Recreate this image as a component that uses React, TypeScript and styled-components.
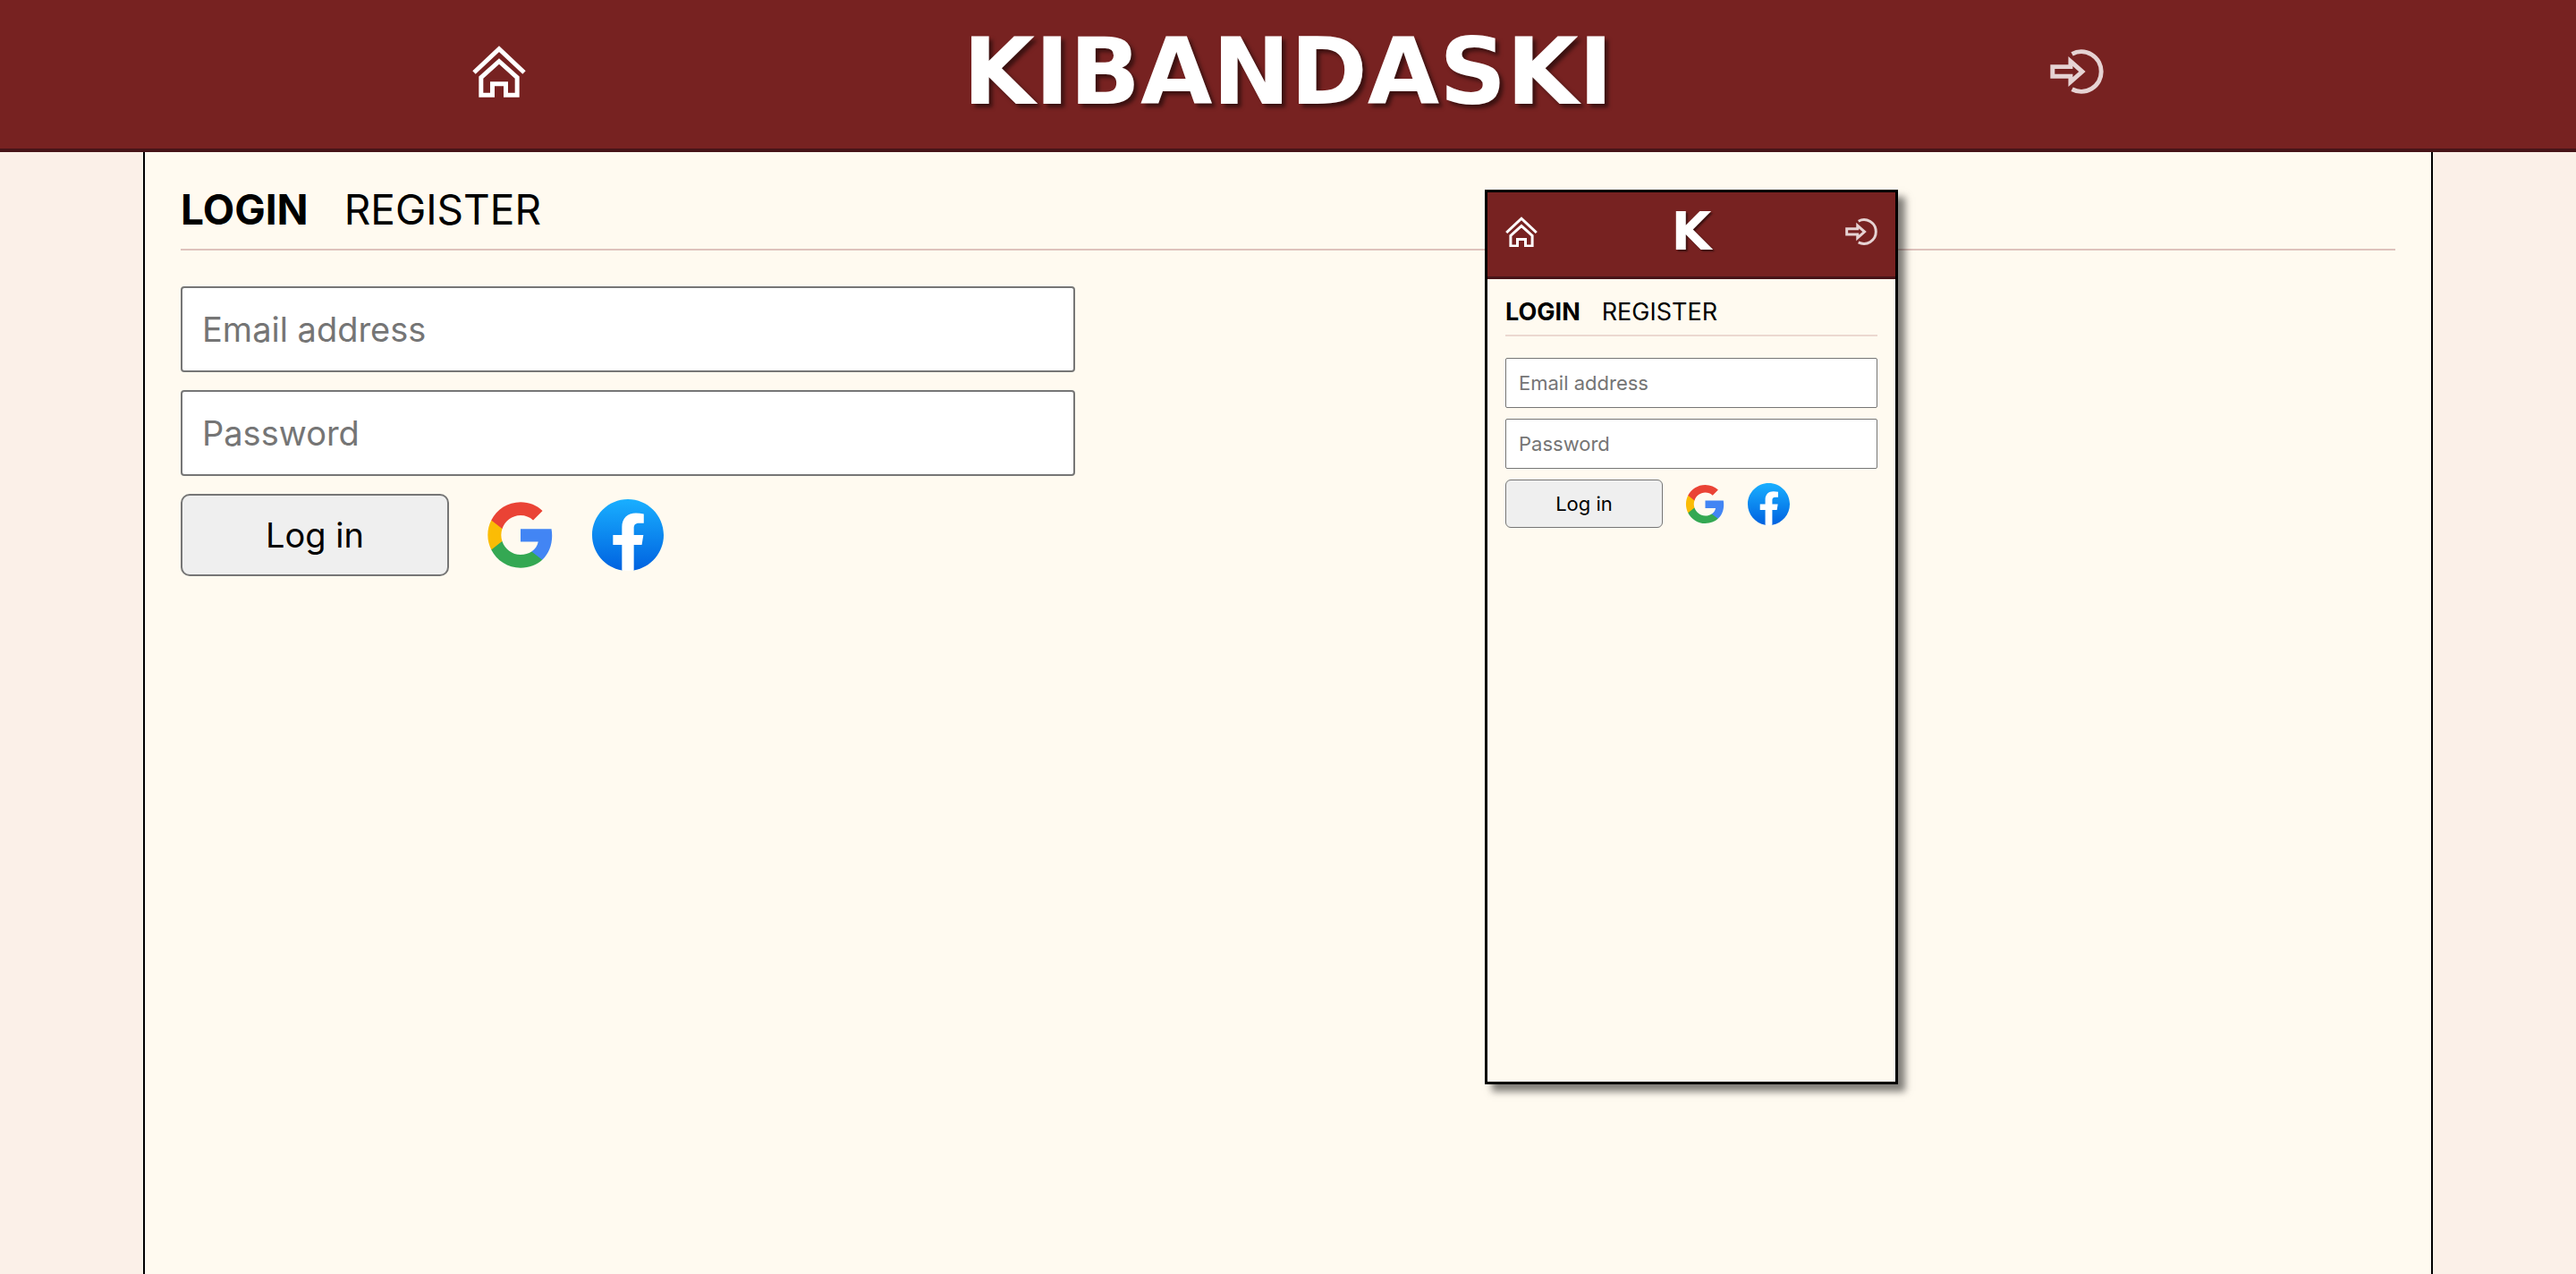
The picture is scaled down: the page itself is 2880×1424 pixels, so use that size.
import React, { useId } from "react";
import styled, { createGlobalStyle, css } from "styled-components";

const GlobalStyle = createGlobalStyle`
  *, *::before, *::after {
    box-sizing: border-box;
  }
  body {
    margin: 0;
    background: #fbf0e8;
    color: #000;
    font-family: Inter, "Noto Sans", sans-serif;
  }
`;

type Sized = { $compact?: boolean };

const Page = styled.div`
  display: flex;
  flex-direction: column;
  min-height: 100vh;
`;

const HeaderBar = styled.header<Sized>`
  background: #772221;
  border-bottom: ${(p) => (p.$compact ? "3px" : "4px")} solid #471418;
  padding: ${(p) => (p.$compact ? "0 20px 6px" : "0 40px 6px")};
`;

const HeaderRow = styled.div<Sized>`
  display: flex;
  align-items: center;
  justify-content: space-between;
  max-width: 1824px;
  height: ${(p) => (p.$compact ? "88px" : "160px")};
  margin: 0 auto;
`;

const Brand = styled.h1<Sized>`
  margin: 0;
  color: #fff;
  font-family: "DejaVu Sans", sans-serif;
  font-weight: 700;
  font-size: ${(p) => (p.$compact ? "58px" : "104px")};
  line-height: 1;
  text-shadow: ${(p) =>
    p.$compact
      ? "2px 2px 2px rgba(0, 0, 0, 0.5)"
      : "4px 4px 4px rgba(0, 0, 0, 0.5)"};
`;

const HeaderLink = styled.a<Sized & { $muted?: boolean }>`
  display: flex;
  color: ${(p) => (p.$muted ? "#e6d3d3" : "#fff")};

  svg {
    display: block;
    width: ${(p) => (p.$compact ? "36px" : "60px")};
    height: auto;
  }
`;

const Main = styled.main`
  position: relative;
  flex: 1;
  width: 100%;
  max-width: 2560px;
  margin: 0 auto;
  padding: 40px;
  background: #fffaf0;
  border: solid #000;
  border-width: 0 2px;
`;

const Tabs = styled.nav<Sized>`
  display: flex;
  gap: ${(p) => (p.$compact ? "24px" : "40px")};
  padding-bottom: ${(p) => (p.$compact ? "12px" : "20px")};
  margin-bottom: ${(p) => (p.$compact ? "24px" : "40px")};
  border-bottom: 2px solid ${(p) => (p.$compact ? "#ecd8d0" : "#dec2bc")};
  font-size: ${(p) => (p.$compact ? "27px" : "46px")};
  line-height: ${(p) => (p.$compact ? "26px" : "48px")};
`;

const Tab = styled.a<{ $active?: boolean }>`
  color: inherit;
  text-decoration: none;
  font-weight: ${(p) => (p.$active ? 700 : 400)};
`;

const Form = styled.form<Sized>`
  display: flex;
  flex-direction: column;
  gap: ${(p) => (p.$compact ? "12px" : "20px")};
  max-width: 1000px;
`;

const controlText = css<Sized>`
  font-family: inherit;
  font-weight: 400;
  font-size: ${(p) => (p.$compact ? "22px" : "38px")};
  border: ${(p) => (p.$compact ? "1px" : "2px")} solid #767676;
`;

const TextBox = styled.input<Sized>`
  ${controlText}
  width: 100%;
  height: ${(p) => (p.$compact ? "56px" : "96px")};
  padding: 0 ${(p) => (p.$compact ? "14px" : "22px")};
  background: #fff;
  border-radius: ${(p) => (p.$compact ? "2px" : "4px")};

  &::placeholder {
    color: #757575;
    opacity: 1;
  }
`;

const Actions = styled.div<Sized>`
  display: flex;
  align-items: center;
  gap: ${(p) => (p.$compact ? "24px" : "40px")};
`;

const SubmitButton = styled.button<Sized>`
  ${controlText}
  width: ${(p) => (p.$compact ? "176px" : "300px")};
  height: ${(p) => (p.$compact ? "54px" : "92px")};
  padding: 0;
  color: #000;
  background: #efefef;
  border-radius: ${(p) => (p.$compact ? "6px" : "10px")};
`;

const SocialButton = styled.button<Sized>`
  padding: 0;
  border: 0;
  background: none;

  svg {
    display: block;
    width: ${(p) => (p.$compact ? "47px" : "80px")};
    height: ${(p) => (p.$compact ? "47px" : "80px")};
  }
`;

const PhonePreview = styled.section`
  position: absolute;
  top: 42px;
  right: 596px;
  width: 462px;
  height: 1000px;
  background: #fffaf0;
  border: 3px solid #000;
  box-shadow: 8px 8px 8px rgba(0, 0, 0, 0.5);
`;

const PhoneBody = styled.div`
  padding: 24px 20px;
`;

const HomeIcon = () => (
  <svg viewBox="84 97 180 174" fill="none" stroke="currentColor" strokeWidth="15" aria-hidden="true">
    <path d="M90 187 L174 108 L258 187" />
    <path d="M113.5 262.5 V204 L174 149.5 L234.5 204 V262.5 H196.5 V225 H151.5 V262.5 Z" />
  </svg>
);

const EnterIcon = () => (
  <svg viewBox="95 104 182 152" fill="none" stroke="currentColor" strokeWidth="15" aria-hidden="true">
    <path d="M103.5 163.5 H164.5 V145 L204 180 L164.5 215 V195.5 H103.5 Z" />
    <path d="M169.5 120.3 A67.5 67.5 0 1 1 169.5 239.7" />
  </svg>
);

const GoogleLogo = () => (
  <svg viewBox="0 0 24 24" aria-hidden="true">
    <path fill="#4285F4" d="M22.56 12.25c0-.78-.07-1.53-.2-2.25H12v4.26h5.92c-.26 1.37-1.04 2.53-2.21 3.31v2.77h3.57c2.08-1.92 3.28-4.74 3.28-8.09z" />
    <path fill="#34A853" d="M12 23c2.97 0 5.46-.98 7.28-2.66l-3.57-2.77c-.98.66-2.23 1.06-3.71 1.06-2.86 0-5.29-1.93-6.16-4.53H2.18v2.84C3.99 20.53 7.7 23 12 23z" />
    <path fill="#FBBC05" d="M5.84 14.09c-.22-.66-.35-1.36-.35-2.09s.13-1.43.35-2.09V7.07H2.18C1.43 8.55 1 10.22 1 12s.43 3.45 1.18 4.93l2.85-2.22.81-.62z" />
    <path fill="#EA4335" d="M12 5.38c1.62 0 3.06.56 4.21 1.64l3.15-3.15C17.45 2.09 14.97 1 12 1 7.7 1 3.99 3.47 2.18 7.07l3.66 2.84c.87-2.6 3.3-4.53 6.16-4.53z" />
  </svg>
);

const FacebookLogo = () => {
  const gradient = useId();
  return (
    <svg viewBox="0 0 36 36" aria-hidden="true">
      <defs>
        <linearGradient id={gradient} x1="0" y1="1" x2="0" y2="0">
          <stop offset="0" stopColor="#0062E0" />
          <stop offset="1" stopColor="#19AFFF" />
        </linearGradient>
      </defs>
      <path fill={`url(#${gradient})`} d="M15 35.8C6.5 34.3 0 26.9 0 18 0 8.1 8.1 0 18 0s18 8.1 18 18c0 8.9-6.5 16.3-15 17.8l-1-.8h-4l-1 .8z" />
      <path fill="#fff" d="m25 23 .8-5H21v-3.5c0-1.4.5-2.5 2.7-2.5H26V7.4c-1.3-.2-2.7-.4-4-.4-4.1 0-7 2.5-7 7v4h-4.5v5H15v12.7c1 .2 2 .3 3 .3s2-.1 3-.3V23h4z" />
    </svg>
  );
};

const SiteHeader = ({ compact }: { compact?: boolean }) => (
  <HeaderBar $compact={compact}>
    <HeaderRow $compact={compact}>
      <HeaderLink href="#home" aria-label="Home" $compact={compact}>
        <HomeIcon />
      </HeaderLink>
      <Brand $compact={compact}>{compact ? "K" : "KIBANDASKI"}</Brand>
      <HeaderLink href="#login" aria-label="Log in" $compact={compact} $muted>
        <EnterIcon />
      </HeaderLink>
    </HeaderRow>
  </HeaderBar>
);

const LoginPanel = ({ compact }: { compact?: boolean }) => (
  <>
    <Tabs $compact={compact}>
      <Tab href="#login" $active>LOGIN</Tab>
      <Tab href="#register">REGISTER</Tab>
    </Tabs>
    <Form $compact={compact} onSubmit={(e) => e.preventDefault()}>
      <TextBox type="email" placeholder="Email address" aria-label="Email address" $compact={compact} />
      <TextBox type="password" placeholder="Password" aria-label="Password" $compact={compact} />
      <Actions $compact={compact}>
        <SubmitButton type="submit" $compact={compact}>Log in</SubmitButton>
        <SocialButton type="button" aria-label="Log in with Google" $compact={compact}>
          <GoogleLogo />
        </SocialButton>
        <SocialButton type="button" aria-label="Log in with Facebook" $compact={compact}>
          <FacebookLogo />
        </SocialButton>
      </Actions>
    </Form>
  </>
);

export default function App() {
  return (
    <Page>
      <GlobalStyle />
      <SiteHeader />
      <Main>
        <LoginPanel />
        <PhonePreview aria-label="Mobile view">
          <SiteHeader compact />
          <PhoneBody>
            <LoginPanel compact />
          </PhoneBody>
        </PhonePreview>
      </Main>
    </Page>
  );
}
